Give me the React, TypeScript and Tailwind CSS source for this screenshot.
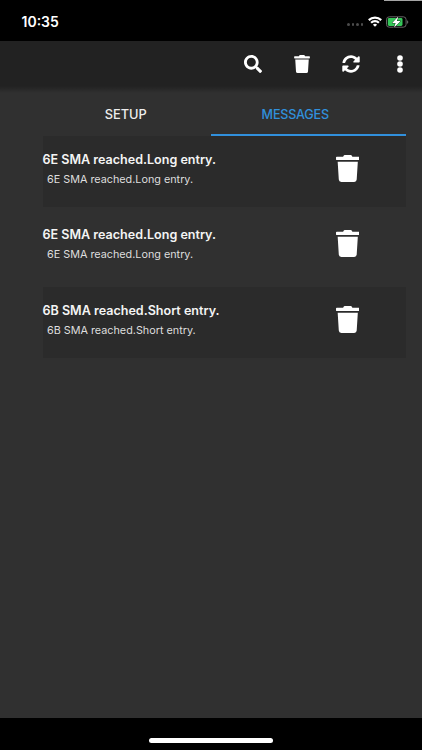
import { FaSearch, FaSyncAlt, FaTrash } from "react-icons/fa";

type Message = {
  id: number;
  title: string;
  body: string;
};

const messages: Message[] = [
  { id: 1, title: "6E SMA reached.Long entry.", body: "6E SMA reached.Long entry." },
  { id: 2, title: "6E SMA reached.Long entry.", body: "6E SMA reached.Long entry." },
  { id: 3, title: "6B SMA reached.Short entry.", body: "6B SMA reached.Short entry." },
];

function WifiIcon() {
  return (
    <svg width="14" height="11" viewBox="0 0 14 11" fill="none" stroke="white" strokeWidth="2.2">
      <path d="M0.8 4.1a8.8 8.8 0 0 1 12.4 0" />
      <path d="M3.1 6.7a5.5 5.5 0 0 1 7.8 0" />
      <path d="M7 10.8 4.9 8.7a3 3 0 0 1 4.2 0Z" fill="white" stroke="none" />
    </svg>
  );
}

function BatteryIcon() {
  return (
    <svg width="23" height="12" viewBox="0 0 23 12">
      <rect x="0.5" y="0.8" width="19.6" height="10.4" rx="2.8" fill="none" stroke="#666" />
      <rect x="1.8" y="2.1" width="14.7" height="7.8" rx="1.4" fill="#35c759" />
      <path d="M21.2 4.2c1.4.5 1.4 3.1 0 3.6Z" fill="#777" />
      <path
        d="M12.5 0.3 6.1 6.9h3.5l-1.6 4.9 6.6-6.8h-3.7Z"
        fill="white"
        stroke="black"
        strokeWidth="0.7"
        paintOrder="stroke"
      />
    </svg>
  );
}

function StatusBar() {
  return (
    <div className="flex h-[41px] shrink-0 flex-col bg-black">
      <div className="h-px w-[38px] self-end bg-[#a5a5a5]" />
      <div className="flex h-10 items-center pl-[21.5px] pr-[13px] pt-px">
        <span className="flex-1 text-[14px] font-semibold leading-5 text-white">10:35</span>
        <div className="mr-[5px] mt-[6px] flex gap-[2px]">
          {[0, 1, 2, 3].map((dot) => (
            <span key={dot} className="size-[2.5px] rounded-full bg-[#4c4c4c]" />
          ))}
        </div>
        <WifiIcon />
        <span className="ml-[4px]">
          <BatteryIcon />
        </span>
      </div>
    </div>
  );
}

function Toolbar() {
  return (
    <header className="flex h-[45px] shrink-0 items-center bg-[#222222] pl-[244px] text-white">
      <button aria-label="Search">
        <FaSearch className="size-[18px]" />
      </button>
      <button aria-label="Delete all" className="ml-8">
        <FaTrash className="h-[18px] w-4" />
      </button>
      <button aria-label="Refresh" className="ml-8">
        <FaSyncAlt className="size-[18px]" />
      </button>
      <button aria-label="More" className="ml-[37px]">
        <svg width="6" height="18" viewBox="0 0 6 18" fill="currentColor">
          <circle cx="3" cy="3" r="2.8" />
          <circle cx="3" cy="9" r="2.8" />
          <circle cx="3" cy="15" r="2.8" />
        </svg>
      </button>
    </header>
  );
}

function MessageRow({ title, body, shaded }: { title: string; body: string; shaded: boolean }) {
  return (
    <li className={`flex h-[71px] justify-between pr-[46.5px] ${shaded ? "bg-[#2b2b2b]" : ""}`}>
      <div className="whitespace-nowrap pt-[13.5px]">
        <h2 className="text-[12.55px] font-semibold leading-5 text-[#f4f4f4]">{title}</h2>
        <p className="pl-[4.5px] text-[10.8px] leading-5 text-[#dedede]">{body}</p>
      </div>
      <button aria-label="Delete" className="mt-[18.5px] self-start text-white">
        <FaTrash className="h-[27px] w-[23.5px]" />
      </button>
    </li>
  );
}

export default function App() {
  return (
    <div className="flex h-[750px] w-[422px] flex-col overflow-hidden bg-[#303030] font-['Inter','Liberation_Sans',sans-serif]">
      <StatusBar />
      <Toolbar />
      <div className="h-[7px] shrink-0 bg-linear-to-b from-[#222222] to-[#303030]" />

      <main className="flex-1 pl-[42.5px] pr-[16.5px]">
        <nav className="flex h-[43px] font-medium">
          <button className="h-[43px] w-[168.5px] pr-[2px] pt-px text-[12.8px] text-[#eeeeee]">
            SETUP
          </button>
          <button className="h-[43px] flex-1 border-b-2 border-[#3190dc] pr-[26px] pt-[3px] text-[12.6px] tracking-[-0.2px] text-[#3190dc]">
            MESSAGES
          </button>
        </nav>
        <ul className="flex flex-col gap-[4.5px]">
          {messages.map((message, index) => (
            <MessageRow
              key={message.id}
              title={message.title}
              body={message.body}
              shaded={index % 2 === 0}
            />
          ))}
        </ul>
      </main>

      {/* Home indicator */}
      <footer className="flex h-8 shrink-0 justify-center bg-black pt-[19.5px]">
        <div className="h-[5px] w-[124px] rounded-full bg-white" />
      </footer>
    </div>
  );
}
